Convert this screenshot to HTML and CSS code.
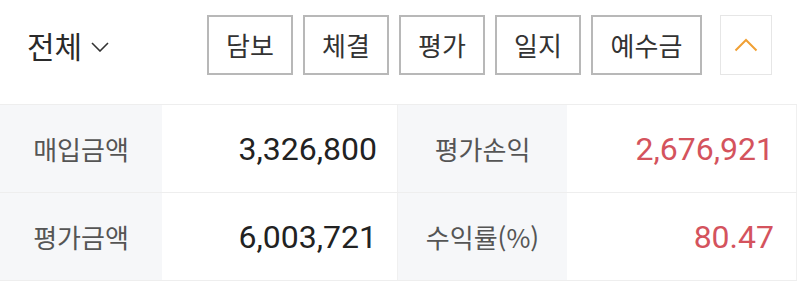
FILE: index.html
```html
<!DOCTYPE html>
<html lang="ko">
<head>
<meta charset="utf-8">
<link rel="stylesheet" href="styles.css">
</head>
<body>
<div class="page">
  <div class="header">
    <div class="filter">
      <span class="filter-label">전체</span>
      <svg class="chev-down" width="18" height="10" viewBox="0 0 18 10"><path d="M1 1 L9 9 L17 1" fill="none" stroke="#333" stroke-width="1.6"/></svg>
    </div>
    <div class="actions">
      <button class="btn">담보</button>
      <button class="btn">체결</button>
      <button class="btn">평가</button>
      <button class="btn">일지</button>
      <button class="btn btn-wide">예수금</button>
      <button class="btn-up" aria-label="접기">
        <svg width="24" height="14" viewBox="0 0 24 14"><path d="M1.5 12.5 L12 2 L22.5 12.5" fill="none" stroke="#f0a035" stroke-width="2"/></svg>
      </button>
    </div>
  </div>
  <div class="summary">
    <div class="cell label">매입금액</div>
    <div class="cell value">3,326,800</div>
    <div class="cell label">평가손익</div>
    <div class="cell value up">2,676,921</div>
    <div class="cell label">평가금액</div>
    <div class="cell value">6,003,721</div>
    <div class="cell label">수익률(%)</div>
    <div class="cell value up">80.47</div>
  </div>
</div>
</body>
</html>
```
FILE: styles.css
```css
html, body {
  margin: 0;
  padding: 0;
  background: #ffffff;
}
body {
  font-family: Roboto, "Noto Sans CJK KR", sans-serif;
  color: #222;
  width: 800px;
  height: 301px;
  overflow: hidden;
}
.header {
  display: flex;
  align-items: center;
  justify-content: space-between;
  padding: 15px 28px 0 27px;
  height: 60px;
}
.filter {
  display: flex;
  align-items: center;
  gap: 9px;
}
.filter-label {
  font-family: "Noto Sans CJK KR", sans-serif;
  font-size: 30px;
  color: #2a2a2a;
  line-height: 1;
}
.chev-down {
  display: block;
  margin-top: 3px;
}
.actions {
  display: flex;
  align-items: center;
  gap: 10px;
}
.btn {
  width: 86px;
  height: 60px;
  box-sizing: border-box;
  border: 2px solid #b8b8b8;
  background: #fff;
  font-family: "Noto Sans CJK KR", sans-serif;
  font-size: 26px;
  color: #333;
  padding: 0;
  line-height: 1;
}
.btn-wide {
  width: 111px;
}
.btn-up {
  width: 52px;
  height: 60px;
  box-sizing: border-box;
  margin-left: 8px;
  border: 1px solid #e6e6e6;
  background: #fff;
  padding: 0;
  display: flex;
  align-items: center;
  justify-content: center;
}
.btn-up svg {
  display: block;
}
.summary {
  margin-top: 29px;
  width: 797px;
  display: grid;
  grid-template-columns: 162px 236px 169px 1fr;
  grid-auto-rows: 87px;
  border-top: 1px solid #eeeeee;
  border-bottom: 1px solid #eeeeee;
  row-gap: 1px;
  background: #eeeeee;
}
.cell {
  display: flex;
  align-items: center;
  box-sizing: border-box;
}
.label {
  background: #f6f7f9;
  justify-content: center;
  font-family: "Noto Sans CJK KR", sans-serif;
  font-size: 26px;
  color: #555;
}
.value {
  background: #fff;
  justify-content: flex-end;
  padding-right: 20px;
  font-size: 32px;
  color: #222;
  border-right: 1px solid #f0f0f0;
}
.value.up {
  color: #d4535d;
  padding-right: 22px;
}
```
